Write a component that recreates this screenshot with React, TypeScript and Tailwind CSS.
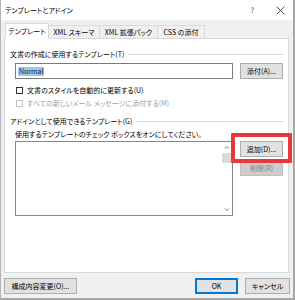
import React from "react";

const font = "font-['Noto_Sans_CJK_JP','Noto_Sans',sans-serif] [font-feature-settings:'palt']";

function Btn({ children, w, disabled, primary }: { children: React.ReactNode; w: string; disabled?: boolean; primary?: boolean }) {
  const base = "h-[16px] flex items-center justify-center text-[7px] leading-[10px] border";
  const style = disabled
    ? "bg-[#cccccc] border-[#bfbfbf] text-[#838383]"
    : primary
    ? "bg-[#e1e1e1] border-[#0078d7] text-black shadow-[inset_0_0_0_1px_#0078d7]"
    : "bg-[#e1e1e1] border-[#adadad] text-black";
  return <div className={`${base} ${style} ${w}`}>{children}</div>;
}

function Section({ label }: { label: string }) {
  return (
    <div className="h-[10px] flex items-center pr-[4px]">
      <span className="text-[7px] leading-[10px] text-black whitespace-nowrap">{label}</span>
      <div className="flex-1 h-px bg-[#dcdcdc] ml-[4px]" />
    </div>
  );
}

function Check({ label, disabled }: { label: string; disabled?: boolean }) {
  return (
    <div className="h-[10px] flex items-center">
      <div className={`ml-[6px] w-[7px] h-[7px] border bg-white ${disabled ? "border-[#c4c4c4]" : "border-[#333333]"}`} />
      <span className={`ml-[4px] text-[7px] leading-[10px] whitespace-nowrap ${disabled ? "text-[#a0a0a0]" : "text-black"}`}>{label}</span>
    </div>
  );
}

export default function App() {
  return (
    <div className={`relative w-[295px] h-[300px] bg-[#f0f0f0] border-l border-l-[#b4b4b4] border-r-2 border-r-[#a6a6a6] border-b-2 border-b-[#a6a6a6] flex flex-col ${font}`}>
      {/* title bar */}
      <div className="h-[20px] bg-white flex items-center pl-[4px] pr-[7px]">
        <span className="text-[7px] leading-[10px] text-black">テンプレートとアドイン</span>
        <span className="ml-auto text-[7px] leading-[10px] text-[#333] mr-[22px]">?</span>
        <svg width="9" height="9" viewBox="0 0 9 9" className="mr-[1px]">
          <path d="M0.5 0.5 L8.5 8.5 M8.5 0.5 L0.5 8.5" stroke="#222" strokeWidth="0.8" />
        </svg>
      </div>

      <div className="flex-1 flex flex-col pl-[3px] pr-[4px]">
        {/* tabs */}
        <div className="h-[19px] flex items-end -mb-px pl-[1px]">
          <div className="relative z-10 h-[16px] w-[44px] bg-white border border-[#d9d9d9] border-b-white flex items-center justify-center text-[7px] leading-[10px] text-black">テンプレート</div>
          <div className="h-[13px] mb-px w-[52px] -ml-px border border-b-0 border-[#d9d9d9] bg-[#f0f0f0] flex items-center justify-center text-[7px] leading-[10px] text-black">XML スキーマ</div>
          <div className="h-[13px] mb-px w-[59px] -ml-px border border-b-0 border-[#d9d9d9] bg-[#f0f0f0] flex items-center justify-center text-[7px] leading-[10px] text-black">XML 拡張パック</div>
          <div className="h-[13px] mb-px w-[48px] -ml-px border border-b-0 border-[#d9d9d9] bg-[#f0f0f0] flex items-center justify-center text-[7px] leading-[10px] text-black">CSS の添付</div>
        </div>

        {/* panel */}
        <div className="h-[235px] bg-white border border-[#d9d9d9] flex flex-col pl-[5px]">
          <div className="mt-[10px]">
            <Section label="文書の作成に使用するテンプレート(T)" />
          </div>
          <div className="mt-[4px] flex items-center">
            <div className="ml-[5px] w-[218px] h-[16px] border border-[#7a7a7a] bg-white flex items-center pl-[2px]">
              <span className="bg-[#99c9ef] text-[#111133] text-[7px] leading-[9px] px-[1px]">Normal</span>
            </div>
            <div className="ml-[7px]">
              <Btn w="w-[43px]">添付(A)...</Btn>
            </div>
          </div>
          <div className="mt-[6px]">
            <Check label="文書のスタイルを自動的に更新する(U)" />
          </div>
          <div className="mt-[3px]">
            <Check label="すべての新しいメール メッセージに添付する(M)" disabled />
          </div>
          <div className="mt-[8px]">
            <Section label="アドインとして使用できるテンプレート(G)" />
          </div>
          <div className="mt-[3px] ml-[5px] h-[10px] flex items-center text-[7px] leading-[10px] text-black whitespace-nowrap">
            使用するテンプレートのチェック ボックスをオンにしてください。
          </div>
          <div className="mt-[2px] flex items-start">
            <div className="ml-[5px] w-[218px] h-[75px] border border-[#828790] bg-white flex justify-end">
              <div className="w-[10px] h-full flex flex-col items-center">
                <svg width="6" height="5" viewBox="0 0 6 5" className="mt-[3px]">
                  <path d="M1 3.5 L3 1.5 L5 3.5" stroke="#606060" strokeWidth="0.9" fill="none" />
                </svg>
                <div className="mt-[3px] w-full h-[10px] bg-[#dadada]" />
                <svg width="6" height="5" viewBox="0 0 6 5" className="mt-auto mb-[3px]">
                  <path d="M1 1.5 L3 3.5 L5 1.5" stroke="#606060" strokeWidth="0.9" fill="none" />
                </svg>
              </div>
            </div>
            <div className="ml-[7px] flex flex-col gap-[3px]">
              <Btn w="w-[43px]">追加(D)...</Btn>
              <Btn w="w-[43px]" disabled>削除(R)</Btn>
            </div>
          </div>
        </div>

        {/* bottom buttons */}
        <div className="mt-[5px] flex items-center">
          <Btn w="w-[73px]">構成内容変更(O)...</Btn>
          <div className="ml-auto flex gap-[7px] -mr-[1px]">
            <Btn w="w-[43px]" primary>OK</Btn>
            <Btn w="w-[45px]">キャンセル</Btn>
          </div>
        </div>
      </div>

      {/* red highlight annotation */}
      <div className="absolute left-[230px] top-[133px] w-[61px] h-[30px] border-[4px] border-[#e8383d] rounded-[1px]" />
    </div>
  );
}
